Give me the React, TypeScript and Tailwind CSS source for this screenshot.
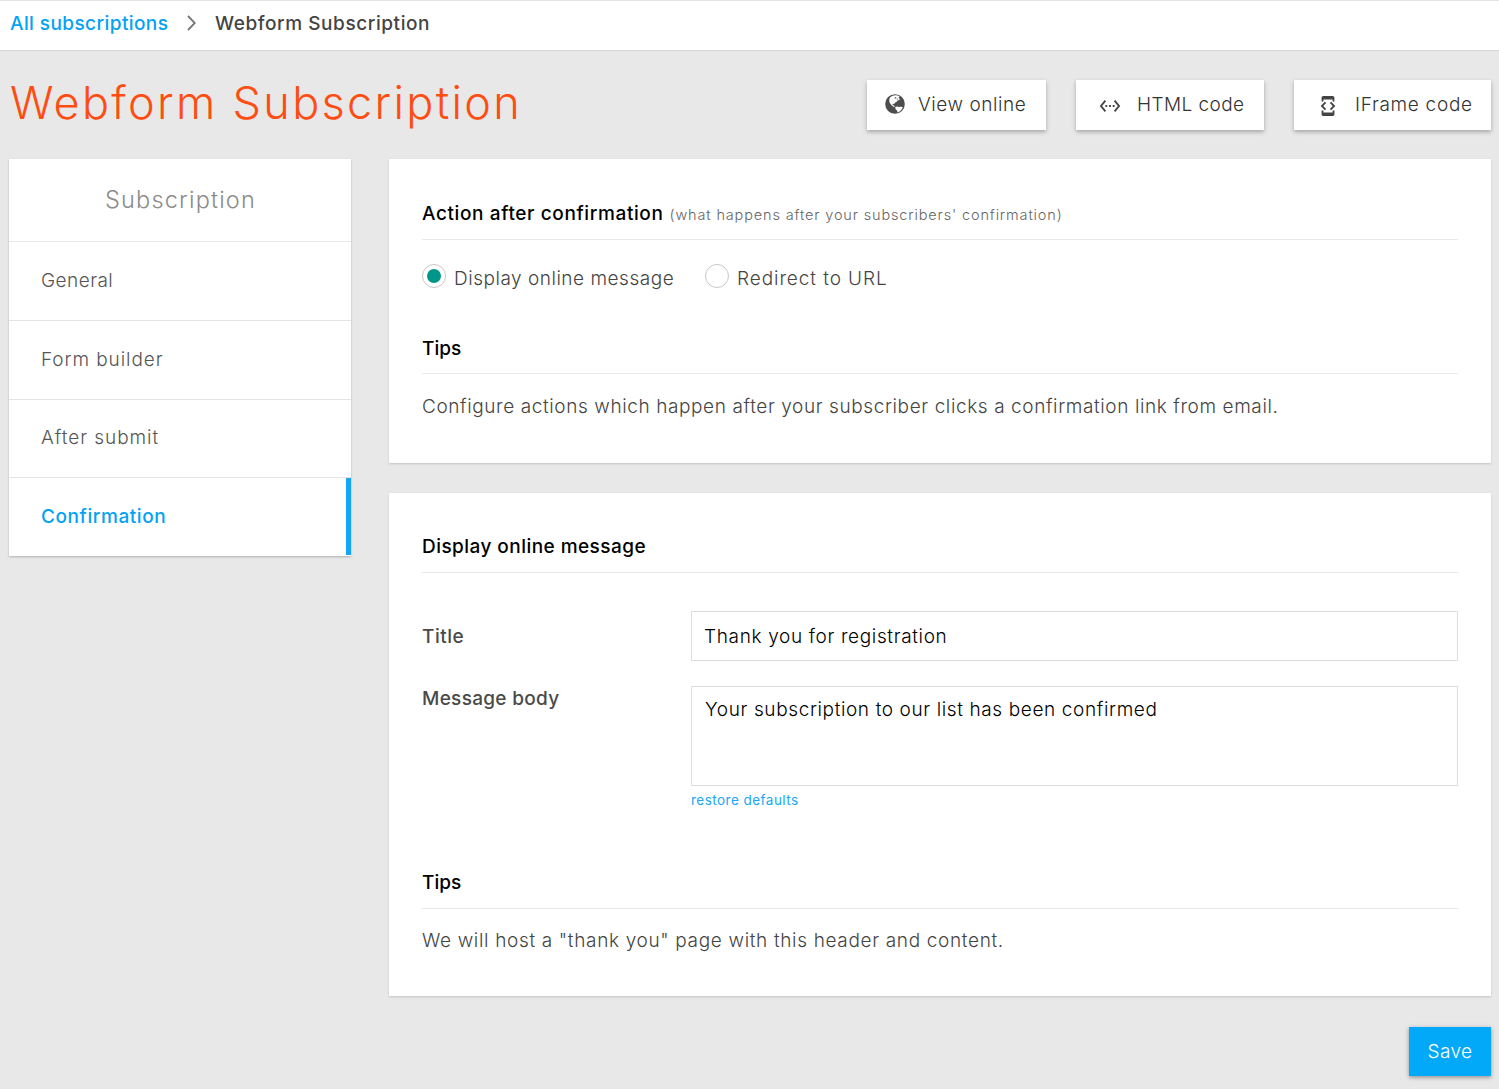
import type { ReactNode } from 'react';
import { MdDeveloperMode, MdSettingsEthernet } from 'react-icons/md';

function GlobeIcon() {
  return (
    <svg viewBox="0 0 20 20" className="mb-[3px] size-5 shrink-0">
      <circle cx="10" cy="10" r="9.8" fill="#4d4d4d" />
      <path
        d="M5.2 3.2 7.6 1.7 10.2 1.3 12.6 1.4 14.8 2.6 13.4 3.5 14.6 4.6 14.4 6 12.6 6.6 11.4 8 9.8 8.8 9.3 10 7.8 9.7 7.5 10.8 9 11.4 9.8 12.9 8.4 12.7 6.4 11 5 9.2 4.3 7.2 4.4 4.8Z"
        fill="#fff"
      />
      <path d="M9.8 3.2h1.6l-.5 1.2-1.3.2ZM11.8 4.6l1 .2-.3 1-.9-.3Z" fill="#4d4d4d" />
      <path d="M10.2 13.1 12 12.5l2 .6 1.6-.4 2.2.2-.9 2.3-1.9 2-2.4 1.2-.4-1.7-1.6-1.5Z" fill="#fff" />
    </svg>
  );
}

function ToolButton({ className, children }: { className: string; children: ReactNode }) {
  return (
    <button
      className={`flex h-[50px] items-center whitespace-nowrap bg-white font-light text-[#333] shadow-[0_2px_5px_rgba(0,0,0,0.2),0_2px_3px_rgba(0,0,0,0.1)] ${className}`}
    >
      {children}
    </button>
  );
}

function Card({ className, children }: { className: string; children: ReactNode }) {
  return (
    <section className={`bg-white px-[33px] shadow-[0_1px_2px_rgba(0,0,0,0.16)] ${className}`}>{children}</section>
  );
}

function SectionTitle({ className, children }: { className: string; children: ReactNode }) {
  return (
    <h2 className={`flex items-baseline border-b border-[#e9e9e9] leading-7 font-medium text-black ${className}`}>
      {children}
    </h2>
  );
}

const menu = [
  { label: 'General', spacing: 'tracking-[0.45px]' },
  { label: 'Form builder', spacing: 'tracking-[0.92px]' },
  { label: 'After submit', spacing: 'tracking-[0.95px]' },
];

export default function App() {
  return (
    <div className="h-[1089px] w-[1499px] overflow-hidden bg-[#e8e8e8] font-['Inter',sans-serif] text-[19px]">
      <nav className="flex h-[51px] items-center border-t border-b border-t-[#e4e4e4] border-b-[#d6d6d6] bg-white pb-0.5 pl-[10px] font-medium whitespace-nowrap">
        <a className="w-[177px] tracking-[0.42px] text-[#03a2f4]">All subscriptions</a>
        <svg viewBox="0 0 9 16" className="mr-[19px] mb-1 h-4 w-[9px]" fill="none" stroke="#777" strokeWidth="1.8">
          <path d="M1 1l6.8 7L1 15" />
        </svg>
        <span className="tracking-[0.57px] text-[#444]">Webform Subscription</span>
      </nav>

      <header className="flex h-[108px] items-start pl-[10px]">
        <h1 className="mt-[22px] w-[857px] text-[45px] leading-[60px] font-[340] tracking-[2.32px] whitespace-nowrap text-[#ff4d12]">
          Webform Subscription
        </h1>
        <div className="mt-[29px] flex gap-[30px]">
          <ToolButton className="w-[179px] pl-[18px]">
            <GlobeIcon />
            <span className="ml-[13px] tracking-[0.55px]">View online</span>
          </ToolButton>
          <ToolButton className="w-[188px] pl-[23px]">
            <MdSettingsEthernet className="mt-[2px] size-[22px] text-[#444]" />
            <span className="ml-[16px] tracking-[0.42px]">HTML code</span>
          </ToolButton>
          <ToolButton className="w-[197px] pl-[23px]">
            <MdDeveloperMode className="mt-[2px] size-[22px] text-[#444]" />
            <span className="ml-[16px] tracking-[0.7px]">IFrame code</span>
          </ToolButton>
        </div>
      </header>

      <main className="flex items-start gap-[38px] pl-[9px]">
        <aside className="h-[397px] w-[342px] bg-white shadow-[0_1px_2px_rgba(0,0,0,0.24)]">
          <div className="flex h-[83px] items-center justify-center border-b-[1.5px] border-[#e9e9e9] pl-px text-[23.5px] font-light tracking-[1.2px] text-[#8c8c8c]">
            Subscription
          </div>
          {menu.map((item, i) => (
            <a
              key={item.label}
              className={`flex items-center border-b border-[#e4e4e4] pl-8 font-light text-[#555] ${item.spacing} ${
                i === 0 ? 'h-[79px]' : 'h-[78.5px]'
              }`}
            >
              {item.label}
            </a>
          ))}
          <a className="flex h-[77px] items-center border-r-[5px] border-r-[#14a5f5] pt-px pl-8 font-medium tracking-[0.58px] text-[#03a2f4]">
            Confirmation
          </a>
        </aside>

        <div className="flex w-[1102px] flex-col">
          <Card className="h-[304px] pt-[41px]">
            <SectionTitle className="pb-[10px] tracking-[0.62px]">
              Action after confirmation
              <small className="ml-[6px] text-[14.5px] font-light tracking-[0.85px] text-[#666]">
                (what happens after your subscribers' confirmation)
              </small>
            </SectionTitle>
            <div className="mt-6 flex h-6 items-center font-light whitespace-nowrap text-[#444]">
              <span className="flex size-6 items-center justify-center rounded-full border-[1.5px] border-[#c8c8c8]">
                <span className="size-[14px] rounded-full bg-[#009688]" />
              </span>
              <span className="mt-1.5 ml-[8px] w-[251px] tracking-[0.52px]">Display online message</span>
              <span className="size-6 rounded-full border-[1.5px] border-[#c8c8c8]" />
              <span className="mt-1.5 ml-[8px] tracking-[0.93px]">Redirect to URL</span>
            </div>
            <SectionTitle className="mt-[47px] pb-[10px]">Tips</SectionTitle>
            <p className="mt-[19px] leading-7 font-light tracking-[0.6px] whitespace-nowrap text-[#444]">
              Configure actions which happen after your subscriber clicks a confirmation link from email.
            </p>
          </Card>

          <Card className="mt-[30px] h-[503px] pt-10">
            <SectionTitle className="pb-[11px] tracking-[0.45px]">Display online message</SectionTitle>
            <div className="mt-[38px] flex items-center">
              <label className="w-[269px] pt-0.5 font-medium tracking-[0.5px] text-[#4a4a4a]">Title</label>
              <div className="flex h-[50px] flex-1 items-center border-[1.5px] border-[#dedede] pt-0.5 pl-3 font-light tracking-[0.65px] text-black">
                Thank you for registration
              </div>
            </div>
            <div className="mt-[25px] flex items-start">
              <label className="-mt-px w-[269px] font-medium tracking-[0.3px] text-[#4a4a4a]">Message body</label>
              <div className="h-[100px] flex-1 border-[1.5px] border-[#dedede] pt-[9px] pl-[13px] font-light tracking-[0.62px] text-black">
                Your subscription to our list has been confirmed
              </div>
            </div>
            <a className="ml-[269px] block h-[83px] pt-1 text-[13.5px] leading-5 font-normal tracking-[0.47px] text-[#19a8f5]">
              restore defaults
            </a>
            <SectionTitle className="pb-[11px]">Tips</SectionTitle>
            <p className="mt-[18px] leading-7 font-light tracking-[0.66px] whitespace-nowrap text-[#444]">
              We will host a "thank you" page with this header and content.
            </p>
          </Card>

          <button className="mt-[31px] h-[49px] w-[82px] self-end bg-[#03a9f9] pt-px font-light tracking-[0.4px] text-white shadow-[0_1px_5px_rgba(0,0,0,0.25),0_2px_3px_rgba(0,0,0,0.15)]">
            Save
          </button>
        </div>
      </main>
    </div>
  );
}
